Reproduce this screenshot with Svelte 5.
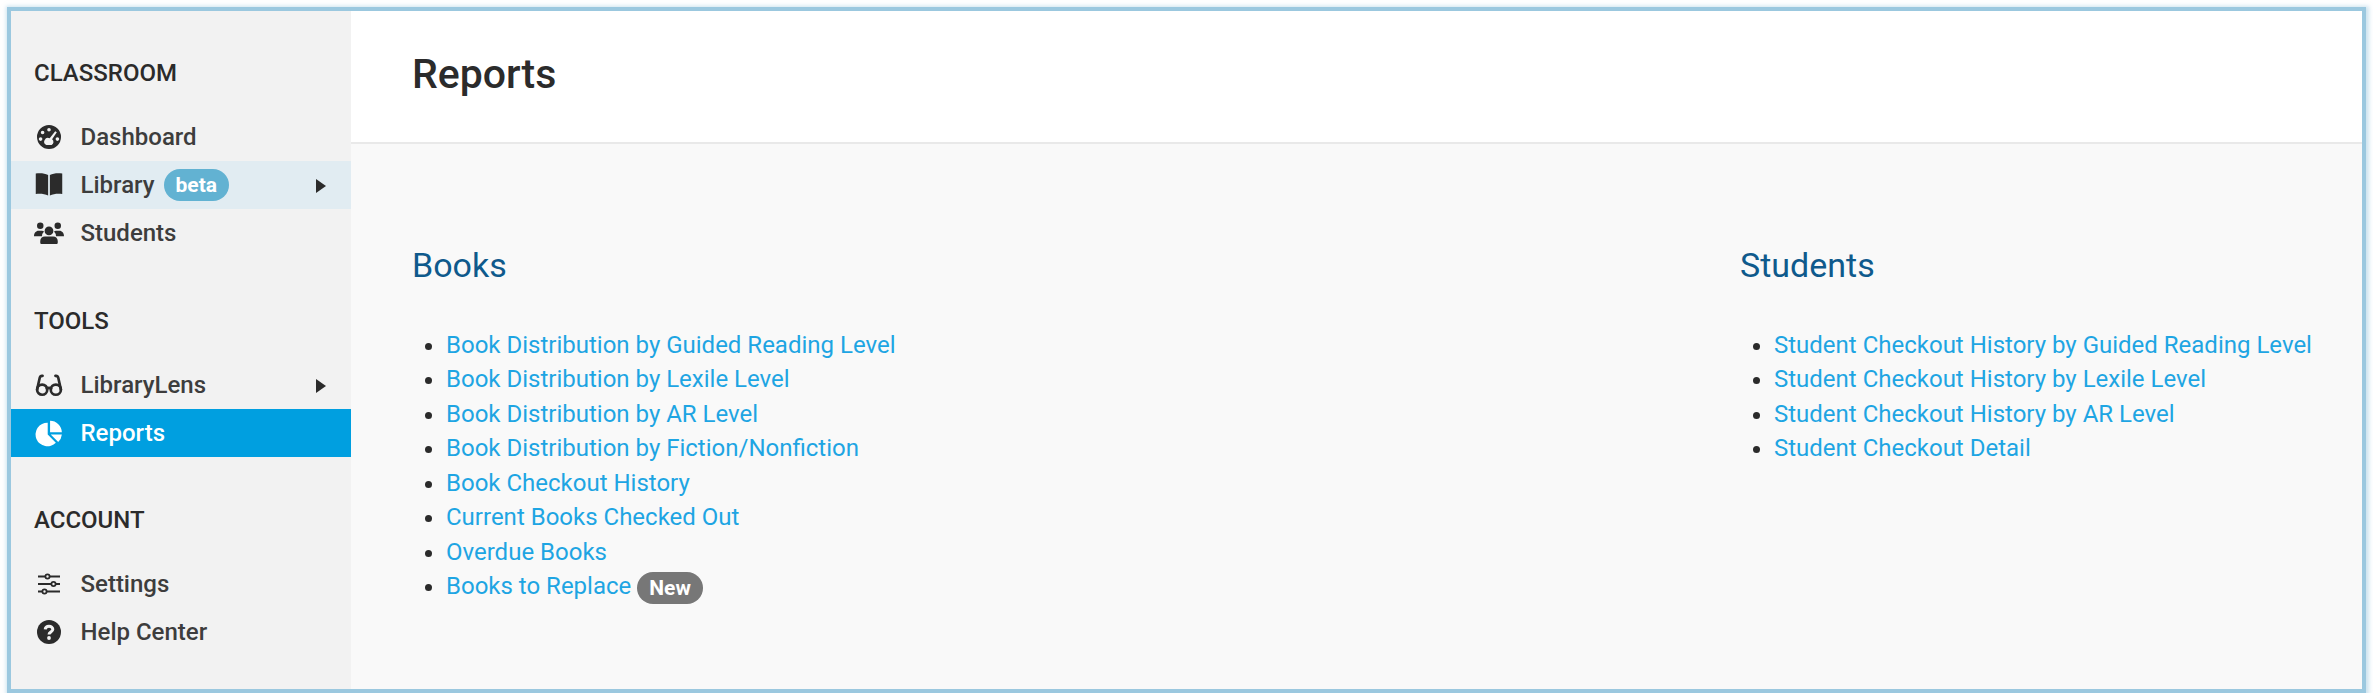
<script>
	const sections = [
		{
			title: 'CLASSROOM',
			items: [
				{ label: 'Dashboard', icon: 'gauge' },
				{ label: 'Library', icon: 'book', badge: 'beta', arrow: true, tint: true },
				{ label: 'Students', icon: 'users' }
			]
		},
		{
			title: 'TOOLS',
			items: [
				{ label: 'LibraryLens', icon: 'glasses', arrow: true },
				{ label: 'Reports', icon: 'pie', active: true }
			]
		},
		{
			title: 'ACCOUNT',
			items: [
				{ label: 'Settings', icon: 'sliders' },
				{ label: 'Help Center', icon: 'help' }
			]
		}
	];

	const books = [
		'Book Distribution by Guided Reading Level',
		'Book Distribution by Lexile Level',
		'Book Distribution by AR Level',
		'Book Distribution by Fiction/Nonfiction',
		'Book Checkout History',
		'Current Books Checked Out',
		'Overdue Books',
		'Books to Replace'
	];

	const students = [
		'Student Checkout History by Guided Reading Level',
		'Student Checkout History by Lexile Level',
		'Student Checkout History by AR Level',
		'Student Checkout Detail'
	];

	// wider icons get a tighter viewBox so they fill more of the 30px slot
	const boxes = {
		book: '-1.6 -1.6 27.2 27.2',
		users: '0 0 24 24',
		glasses: '-1.6 -1.6 27.2 27.2',
		pie: '-2 -2 28 28'
	};
</script>

{#snippet icon(name)}
	<svg class="icon" viewBox={boxes[name] ?? '-3 -3 30 30'} aria-hidden="true">
		{#if name === 'gauge'}
			<path fill="currentColor" fill-rule="evenodd" d="M12 0a12 12 0 1 0 0 24 12 12 0 0 0 0-24ZM12 3a1.8 1.8 0 1 1 0 3.6A1.8 1.8 0 0 1 12 3ZM5.6 5.7a1.8 1.8 0 1 1 0 3.6 1.8 1.8 0 0 1 0-3.6ZM18.2 6.2l1.6 1.1-4.7 7a3.4 3.4 0 0 1-.4 5.7H9.3a3.4 3.4 0 0 1 3.4-6.7ZM3.6 12.3a1.8 1.8 0 1 1 0 3.6 1.8 1.8 0 0 1 0-3.6ZM20.4 12.3a1.8 1.8 0 1 1 0 3.6 1.8 1.8 0 0 1 0-3.6Z" />
		{:else if name === 'book'}
			<path fill="currentColor" d="M0 1.6C3.6 1 8 1.2 11.2 3V21.6C8 20 4 19.7 0 20.2ZM24 1.6C20.4 1 16 1.2 12.8 3V21.6C16 20 20 19.7 24 20.2Z" />
		{:else if name === 'users'}
			<path fill="currentColor" d="M5 3.6a2.6 2.6 0 1 1 0 5.2 2.6 2.6 0 0 1 0-5.2ZM19 3.6a2.6 2.6 0 1 1 0 5.2 2.6 2.6 0 0 1 0-5.2ZM12 6.8a3.5 3.5 0 1 1 0 7 3.5 3.5 0 0 1 0-7ZM0 14.6c0-2.6 1.6-4.4 3.6-4.4h2.8c.6 0 1.2.2 1.6.6a5.2 5.2 0 0 0-1.6 3.8H0ZM24 14.6c0-2.6-1.6-4.4-3.6-4.4h-2.8c-.6 0-1.2.2-1.6.6a5.2 5.2 0 0 1 1.6 3.8H24ZM8.6 14.8h6.8c2.1 0 3.6 1.6 3.6 3.6v1.4c0 .6-.5 1-1 1H6c-.5 0-1-.4-1-1v-1.4c0-2 1.5-3.6 3.6-3.6Z" />
		{:else if name === 'glasses'}
			<g fill="none" stroke="currentColor" stroke-width="2.4" stroke-linecap="round">
				<circle cx="5.8" cy="16.2" r="4.6" />
				<circle cx="18.2" cy="16.2" r="4.6" />
				<path d="M10 15.2c1.2-.8 2.8-.8 4 0M1.2 16.2 3.6 5.4c.3-1.2 1.2-1.9 2.6-1.7M22.8 16.2 20.4 5.4c-.3-1.2-1.2-1.9-2.6-1.7" />
			</g>
		{:else if name === 'pie'}
			<path fill="currentColor" d="M10.8 2.4V13.3L18.4 21A11 11 0 1 1 10.8 2.4ZM13 0.6A11 11 0 0 1 24 11.4H13ZM13.6 13.4H24A11 11 0 0 1 20.6 20.4Z" />
		{:else if name === 'sliders'}
			<g fill="none" stroke="currentColor" stroke-width="1.8">
				<path d="M1 4.5H8.4M12.6 4.5H23M1 12H14.4M18.6 12H23M1 19.5H5.4M9.6 19.5H23" />
				<circle cx="10.5" cy="4.5" r="2.1" />
				<circle cx="16.5" cy="12" r="2.1" />
				<circle cx="7.5" cy="19.5" r="2.1" />
			</g>
		{:else if name === 'help'}
			<circle cx="12" cy="12" r="12" fill="currentColor" />
			<path fill="none" stroke="#f2f2f2" stroke-width="3" d="M8.2 9.4c.2-2 1.8-3.2 3.8-3.2 2.2 0 3.8 1.3 3.8 3 0 2.9-3.8 2.7-3.8 5.4" />
			<circle cx="12" cy="18" r="1.9" fill="#f2f2f2" />
		{/if}
	</svg>
{/snippet}

<div class="frame">
	<aside class="sidebar">
		{#each sections as section}
			<h4>{section.title}</h4>
			<ul class="nav">
				{#each section.items as item}
					<li class="nav-item" class:tint={item.tint} class:active={item.active}>
						{@render icon(item.icon)}
						<span>{item.label}</span>
						{#if item.badge}<span class="badge beta">{item.badge}</span>{/if}
						{#if item.arrow}<i class="arrow"></i>{/if}
					</li>
				{/each}
			</ul>
		{/each}
	</aside>

	<main class="main">
		<header class="top">
			<h1>Reports</h1>
		</header>
		<div class="columns">
			<section>
				<h2>Books</h2>
				<ul class="links">
					{#each books as book}
						<li>
							<a href="#top">{book}</a>
							{#if book === 'Books to Replace'}<span class="badge new">New</span>{/if}
						</li>
					{/each}
				</ul>
			</section>
			<section>
				<h2>Students</h2>
				<ul class="links">
					{#each students as student}
						<li><a href="#top">{student}</a></li>
					{/each}
				</ul>
			</section>
		</div>
	</main>
</div>

<style>
	:global(body) {
		background: #fff;
		font-family: Roboto, "Liberation Sans", sans-serif;
		color: #333;
	}

	.frame {
		box-sizing: border-box;
		display: flex;
		width: 2359px;
		height: 686px;
		margin: 7px 0 0 7px;
		border: 4px solid #9bc8df;
		box-shadow: 1px 1px 4px 2px rgba(155, 200, 223, 0.5);
	}

	.sidebar {
		flex: 0 0 340px;
		background: #f2f2f2;
		padding-top: 48px;
	}

	h4 {
		margin: 0 0 26px 23px;
		font-size: 24px;
		line-height: 28px;
		font-weight: 500;
		color: #2b2b2b;
	}

	.nav {
		list-style: none;
		margin: 0 0 49.5px;
		padding: 0;
	}

	.nav-item {
		position: relative;
		display: flex;
		align-items: center;
		height: 48px;
		padding-left: 23px;
		font-size: 24px;
		font-weight: 500;
		color: #3d3d3d;
	}

	.nav-item.tint {
		background: #e1ecf2;
	}

	.nav-item.active {
		background: #009fe0;
		color: #fff;
	}

	.icon {
		flex: none;
		width: 30px;
		height: 30px;
		margin-right: 16.5px;
		color: #2b2b2b;
	}

	.active .icon {
		color: #fff;
	}

	.arrow {
		position: absolute;
		right: 25px;
		top: 18px;
		border-left: 10px solid #2b2b2b;
		border-top: 7.5px solid transparent;
		border-bottom: 7.5px solid transparent;
	}

	.badge {
		display: inline-block;
		border-radius: 16px;
		color: #fff;
		font-weight: 700;
		text-align: center;
	}

	.beta {
		margin-left: 9px;
		padding: 0 12px;
		font-size: 21px;
		line-height: 32px;
		background: #62b2d2;
	}

	.new {
		padding: 0 12px;
		font-size: 21px;
		line-height: 32px;
		background: #777;
		vertical-align: -1px;
	}

	.main {
		flex: 1;
		background: #f9f9f9;
	}

	.top {
		height: 131px;
		background: #fff;
		border-bottom: 2px solid #e9e9e9;
		padding-left: 61px;
		display: flex;
		align-items: center;
	}

	h1 {
		margin: 0 0 5px;
		font-size: 41px;
		font-weight: 500;
		color: #2b2b2b;
	}

	.columns {
		display: grid;
		grid-template-columns: 1328px 1fr;
		padding: 101px 0 0 61px;
	}

	h2 {
		margin: 0 0 42.5px;
		font-size: 34px;
		line-height: 40px;
		font-weight: 400;
		color: #0f5a8c;
	}

	.links {
		margin: 0;
		padding-left: 34px;
		font-size: 24px;
		line-height: 34.5px;
		color: #2b2b2b;
	}

	a {
		color: #1ea5e3;
		text-decoration: none;
	}
</style>
